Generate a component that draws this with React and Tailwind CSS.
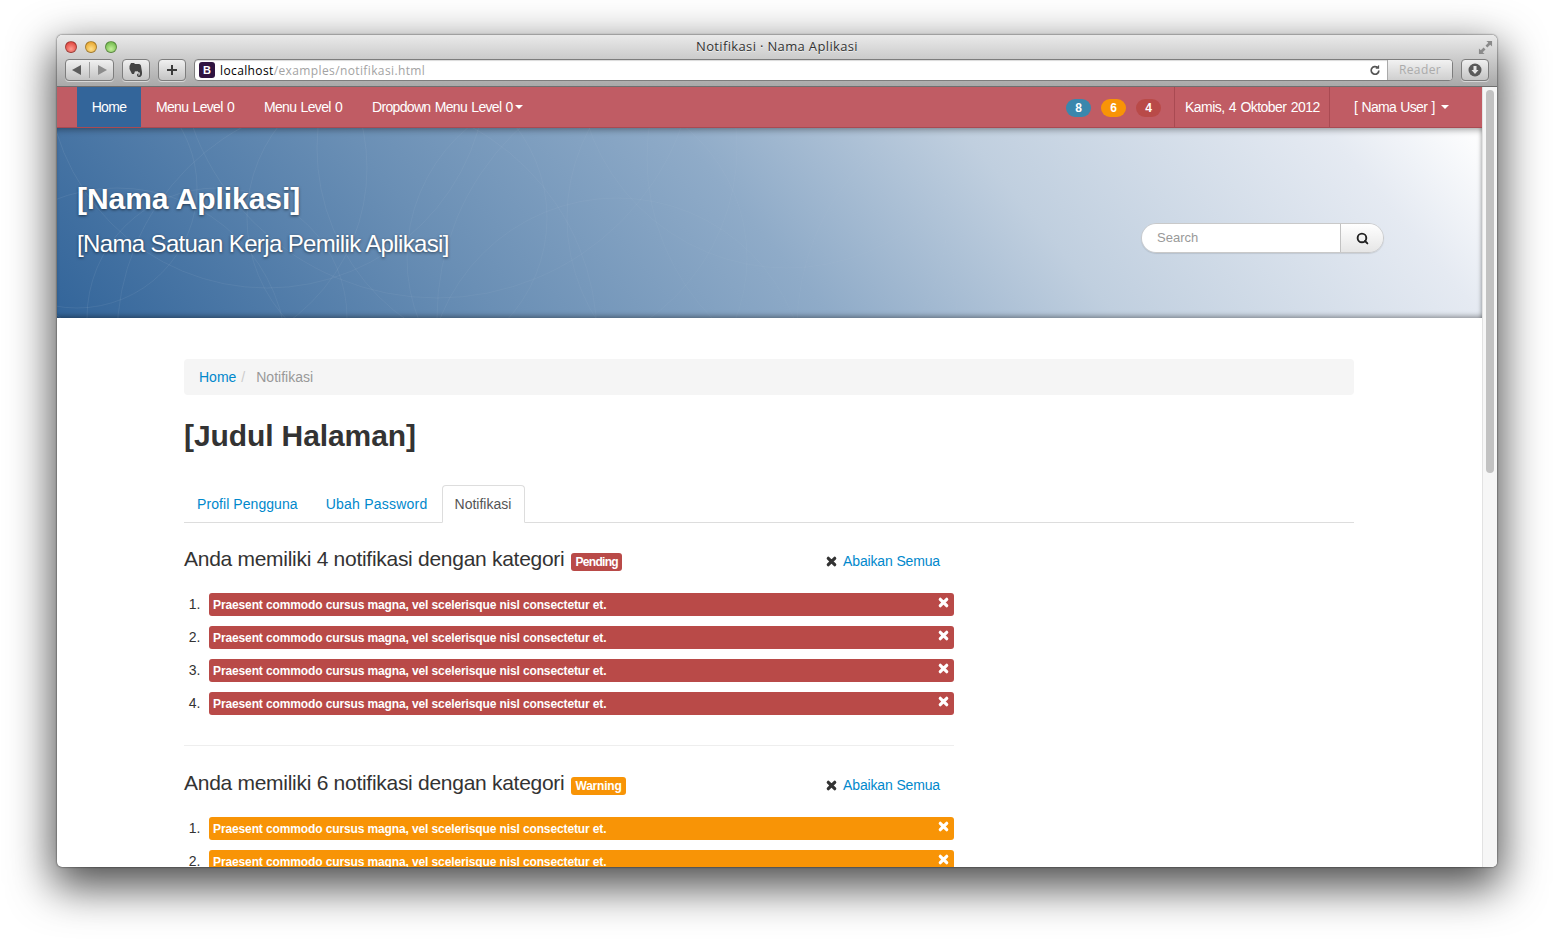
import React from "react";
import { Search } from "lucide-react";

const menus = ["Menu Level 0", "Menu Level 0"];

const heroCircles = [
  [120, 40, 190], [300, 210, 240], [470, 20, 210], [640, 190, 260], [820, 30, 230],
  [60, 230, 170], [210, -60, 220], [560, 260, 190], [380, -90, 260], [730, -70, 210],
  [980, 200, 240], [20, 60, 120], [160, 190, 130], [340, 90, 150], [520, 130, 170], [700, 90, 190],
];

const CrossIcon = ({ className }) => (
  <svg viewBox="0 0 12 12" className={className} fill="none" stroke="currentColor" strokeWidth="3.5" strokeLinecap="round">
    <path d="M2.500 2.500l7 7M9.500 2.500l-7 7" />
  </svg>
);

const Caret = () => (
  <span className="inline-block w-0 h-0 border-x-4 border-x-transparent border-t-4 border-t-white align-middle" />
);

const ToolButton = ({ className, children }) => (
  <div className={`h-[22px] flex items-center justify-center rounded-[4px] border border-[#7d7d7d] bg-gradient-to-b from-[#f0f0f0] to-[#c4c4c4] shadow-[0_1px_0_rgba(255,255,255,0.5)] ${className}`}>
    {children}
  </div>
);

const Light = ({ className }) => (
  <span className={`w-3 h-3 rounded-full border border-black/30 ${className}`} />
);

const TitleBar = () => (
  <div className="h-[52px] shrink-0 bg-gradient-to-b from-[#eaeaea] to-[#a9a9a9] border-b border-[#6f6f6f] flex flex-col px-2 rounded-t-[5px] font-['DejaVu_Sans',sans-serif]">
    <div className="h-6 flex items-center">
      <div className="w-[60px] flex gap-2 items-center">
        <Light className="bg-[radial-gradient(circle_at_50%_70%,#ff9a8f,#d8322c)]" />
        <Light className="bg-[radial-gradient(circle_at_50%_70%,#ffe08a,#e29a1c)]" />
        <Light className="bg-[radial-gradient(circle_at_50%_70%,#c3f09a,#5fae3b)]" />
      </div>
      <div className="flex-1 text-center text-[13px] text-[#333] [text-shadow:0_1px_0_rgba(255,255,255,0.6)] font-['Open_Sans',sans-serif] tracking-[0.35px]">
        Notifikasi · Nama Aplikasi
      </div>
      <div className="w-[60px] flex justify-end">
        <svg viewBox="0 0 16 16" className="w-[15px] h-[15px] text-[#8a8a8a] mr-[-4px]" fill="currentColor">
          <path d="M9 1h6v6l-2-2-3 3-2-2 3-3zM1 15V9l2 2 3-3 2 2-3 3 2 2z" />
        </svg>
      </div>
    </div>
    <div className="flex items-center gap-2">
      <ToolButton className="w-[49px]">
        <svg viewBox="0 0 12 12" className="w-3 h-3 text-[#5c5c5c] mr-1.5" fill="currentColor"><path d="M1 6l9-5v10z" /></svg>
        <span className="w-px h-4 bg-[#9c9c9c]" />
        <svg viewBox="0 0 12 12" className="w-3 h-3 text-[#8c8c8c] ml-1.5" fill="currentColor"><path d="M11 6L2 1v10z" /></svg>
      </ToolButton>
      <ToolButton className="w-7">
        <svg viewBox="0 0 16 16" className="w-4 h-4 text-[#444]" fill="currentColor">
          <path d="M3 1h3l1 1h4c1 0 2 1 2 2l1 6c.3 2.500-.5 5-2.500 5-1.500 0-2.500-.5-2.500-2 0-1 .7-1.500 1.500-1.500l.3 1-.8.2c0 .6.4.8 1 .8.800 0 1-1.500.8-3-.8 0-2-.3-2.300-1.500-.5.500-2 .5-2.500.3L6 12H4L1.500 7V4z" />
        </svg>
      </ToolButton>
      <ToolButton className="w-7">
        <svg viewBox="0 0 12 12" className="w-3 h-3 text-[#3c3c3c]" fill="currentColor"><path d="M5 1h2v4h4v2H7v4H5V7H1V5h4z" /></svg>
      </ToolButton>
      <div className="flex-1 h-[22px] flex items-center rounded-[4px] border border-[#7d7d7d] bg-white overflow-hidden shadow-[inset_0_1px_1px_rgba(0,0,0,0.15)]">
        <span className="ml-1 w-4 h-4 shrink-0 rounded-[3px] bg-[#2f1340] flex items-center justify-center text-white text-[11px] font-bold font-['Liberation_Sans',sans-serif]">B</span>
        <span className="ml-[5px] mt-px text-[12px] tracking-[0.38px] text-black font-['Open_Sans',sans-serif]">localhost<span className="text-[#a3a3a3]">/examples/notifikasi.html</span></span>
        <div className="flex-1" />
        <svg viewBox="0 0 14 14" className="w-3 h-3 mr-1.5 text-[#555]" fill="none" stroke="currentColor" strokeWidth="2">
          <path d="M11.500 7.500a4.500 4.500 0 1 1-1.500-3.400" />
          <path d="M11.800 1v4.500H7.500z" fill="currentColor" stroke="none" />
        </svg>
        <div className="w-[65px] h-full flex items-center justify-center border-l border-[#aaa] bg-gradient-to-b from-[#f2f2f2] to-[#cfcfcf] text-[12px] text-[#ababab] font-['Open_Sans',sans-serif] tracking-[0.4px]">Reader</div>
      </div>
      <ToolButton className="w-7">
        <svg viewBox="0 0 14 14" className="w-[14px] h-[14px]">
          <circle cx="7" cy="7" r="6.500" fill="#5a5a5a" />
          <path d="M5.500 3h3v4h2L7 11 3.500 7h2z" fill="#e6e6e6" />
        </svg>
      </ToolButton>
    </div>
  </div>
);

const Navbar = () => (
  <div className="h-[41px] shrink-0 bg-[#c05c64] border-b border-[#a94a52] flex items-stretch pl-5 text-[14px] tracking-[-0.67px] [word-spacing:1px] text-white">
    <a className="bg-[#33659a] w-16 justify-center flex items-center">Home</a>
    {menus.map((m, i) => (
      <a key={i} className="px-[15px] flex items-center">{m}</a>
    ))}
    <a className="px-[15px] flex items-center gap-[2px]">Dropdown Menu Level 0<Caret /></a>
    <div className="flex-1" />
    <div className="flex items-center gap-[10px] pr-[13px] pt-px text-[12px] font-bold tracking-normal">
      <span className="w-[25px] h-[18px] rounded-[9px] bg-[#3a87ad] flex items-center justify-center">8</span>
      <span className="w-[25px] h-[18px] rounded-[9px] bg-[#f89406] flex items-center justify-center">6</span>
      <span className="w-[25px] h-[18px] rounded-[9px] bg-[#b94a48] flex items-center justify-center">4</span>
    </div>
    <div className="w-[155px] border-l border-[#a94a52] flex items-center pl-[10px] tracking-[-0.55px]">Kamis, 4 Oktober 2012</div>
    <div className="w-[153px] border-l border-[#a94a52] flex items-center pl-6 gap-[6px]">[ Nama User ] <Caret /></div>
  </div>
);

const Hero = () => (
  <div className="relative h-[190px] shrink-0 bg-[linear-gradient(50deg,#33659a_0%,#6a8fb5_28%,#8fabc8_49%,#c0cfdf_67%,#e5eaf2_90%,#ffffff_100%)] shadow-[inset_0_6px_6px_-4px_rgba(0,0,0,0.35),inset_0_-5px_5px_-3px_rgba(0,0,0,0.35),inset_-4px_0_4px_-3px_rgba(0,0,0,0.25)] flex items-center justify-between pl-5 pr-[98px] overflow-hidden">
    <svg className="absolute inset-0 w-full h-full [mask-image:linear-gradient(90deg,black,transparent_80%)]" fill="none" stroke="white" strokeOpacity="0.07">
      {heroCircles.map(([cx, cy, r], i) => (
        <circle key={i} cx={cx} cy={cy} r={r} />
      ))}
    </svg>
    <div className="relative mb-[7px] text-white [text-shadow:0_1px_3px_rgba(0,0,0,0.55)]">
      <div className="text-[30px] leading-[36px] font-bold tracking-[-0.05px]">[Nama Aplikasi]</div>
      <div className="text-[24px] leading-[30px] mt-[12px] tracking-[-0.64px]">[Nama Satuan Kerja Pemilik Aplikasi]</div>
    </div>
    <div className="relative flex h-[30px] w-[243px] mt-[30px] rounded-[15px] border border-[#c9c9c9] shadow-[0_1px_1px_rgba(0,0,0,0.1)] overflow-hidden">
      <div className="w-[198px] bg-white text-[#999] text-[13px] leading-[28px] pl-[15px]">Search</div>
      <div className="flex-1 border-l border-[#c2c2c2] bg-gradient-to-b from-white to-[#e6e6e6] flex items-center justify-center">
        <Search className="w-[13px] h-[13px] text-[#222]" strokeWidth={3.5} />
      </div>
    </div>
  </div>
);

const NotifSection = ({ count, label, labelTracking, bg, rows }) => (
  <div className="w-[770px]">
    <div className="flex items-center justify-between h-[36px] pr-[14px]">
      <div className="flex items-center text-[#333] text-[21px] tracking-[-0.28px]">
        Anda memiliki {count} notifikasi dengan kategori
        <span className={`ml-[7px] mt-[6px] ${bg} text-white text-[12px] leading-[18px] font-bold px-1 rounded-[3px] ${labelTracking}`}>{label}</span>
      </div>
      <div className="flex items-center gap-[6px] text-[14px] mt-1">
        <CrossIcon className="w-[11px] h-[11px] text-[#333]" />
        <a className="text-[#0088cc] tracking-[-0.15px]">Abaikan Semua</a>
      </div>
    </div>
    <ol className="mt-[16px] flex flex-col gap-[10px]">
      {Array.from({ length: rows }).map((_, i) => (
        <li key={i} className="flex items-center text-[14px] text-[#333]">
          <span className="w-[25px] text-center pr-1">{i + 1}.</span>
          <div className={`flex-1 h-[23px] ${bg} rounded-[3px] flex items-center justify-between pl-1 pr-[5px] text-white text-[12px] font-bold tracking-[-0.12px]`}>
            Praesent commodo cursus magna, vel scelerisque nisl consectetur et.
            <CrossIcon className="w-[11px] h-[11px] mb-[5px] text-white" />
          </div>
        </li>
      ))}
    </ol>
  </div>
);

const Content = () => (
  <div className="w-[1170px] ml-[127px] pt-[41px]">
    <div className="h-9 bg-[#f5f5f5] rounded-[4px] flex items-center px-[15px] text-[14px]">
      <a className="text-[#0088cc]">Home</a>
      <span className="text-[#ccc] ml-[5px] mr-[11px]">/</span>
      <span className="text-[#999]">Notifikasi</span>
    </div>
    <h1 className="mt-[21px] text-[30px] leading-[40px] font-bold text-[#333] tracking-[-0.1px]">[Judul Halaman]</h1>
    <div className="mt-[29px] h-[38px] border-b border-[#ddd] flex items-end text-[14px]">
      <a className="h-[37px] pt-px px-[13px] flex items-center text-[#0088cc] tracking-[0.07px]">Profil Pengguna</a>
      <a className="h-[37px] pt-px ml-[2px] px-[13px] flex items-center text-[#0088cc] tracking-[0.23px]">Ubah Password</a>
      <a className="h-[38px] pt-px ml-px pl-[12px] pr-[13px] flex items-center text-[#555] border border-[#ddd] border-b-white rounded-t-[4px] bg-white mb-[-1px]">Notifikasi</a>
    </div>
    <div className="mt-[18px]">
      <NotifSection count={4} label="Pending" labelTracking="tracking-[-0.7px]" bg="bg-[#b94a48]" rows={4} />
    </div>
    <div className="w-[770px] h-px bg-[#eee] mt-[30px] mb-[19px]" />
    <NotifSection count={6} label="Warning" labelTracking="tracking-[-0.2px]" bg="bg-[#f89406]" rows={2} />
  </div>
);

export default function App() {
  return (
    <div className="h-[946px] w-[1554px] overflow-hidden bg-white pt-[35px] pl-[57px] font-['Liberation_Sans',Arial,sans-serif]">
      <div className="w-[1440px] h-[832px] flex flex-col rounded-[5px] bg-white overflow-hidden shadow-[0_16px_44px_4px_rgba(0,0,0,0.7),0_0_2px_rgba(0,0,0,0.8)]">
        <TitleBar />
        <div className="flex flex-1 min-h-0">
          <div className="w-[1425px] flex flex-col overflow-hidden">
            <Navbar />
            <Hero />
            <Content />
          </div>
          <div className="w-[15px] bg-[#f6f6f6] border-l border-[#e2e2e2] pt-[3px] pl-[3px]">
            <div className="w-2 h-[383px] rounded-[4px] bg-[#c2c2c2]" />
          </div>
        </div>
      </div>
    </div>
  );
}
